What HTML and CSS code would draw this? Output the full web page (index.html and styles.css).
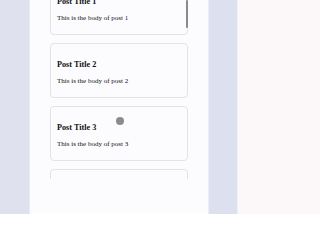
FILE: index.html
```html
<!DOCTYPE html>
<html>
<head>
<meta charset="utf-8">
<link rel="stylesheet" href="styles.css">
</head>
<body>
<div class="app">
  <div class="gutter-left"></div>
  <div class="panel">
    <div class="scroller">
      <div class="list">
        <div class="card"><h3>Post Title 1</h3><p>This is the body of post 1</p></div>
        <div class="card"><h3>Post Title 2</h3><p>This is the body of post 2</p></div>
        <div class="card"><h3>Post Title 3</h3><p>This is the body of post 3</p></div>
        <div class="card"><h3>Post Title 4</h3><p>This is the body of post 4</p></div>
      </div>
      <div class="scrollbar"></div>
    </div>
    <div class="cursor"></div>
  </div>
  <div class="gutter-mid"></div>
  <div class="side"></div>
</div>
</body>
</html>
```
FILE: styles.css
```css
html, body {
  margin: 0;
  padding: 0;
  height: 214px;
  overflow: hidden;
}
.app {
  display: flex;
  height: 214px;
  font-family: "Liberation Serif", "Times New Roman", serif;
  color: #111;
}
.gutter-left {
  width: 29px;
  background: #dfe1ee;
  border-right: 1px solid #e9ebf4;
}
.panel {
  position: relative;
  width: 138px;
  padding: 0 20px;
  background: #fcfbfd;
  border-right: 1px solid #eceef6;
}
.scroller {
  position: relative;
  height: 179px;
  overflow: hidden;
}
.list {
  margin-top: -20px;
  display: flex;
  flex-direction: column;
  gap: 8px;
}
.card {
  border: 1px solid #e3e3e6;
  border-radius: 4px;
  padding: 8px 6px 5px;
  background: #fcfbfd;
}
.card h3 {
  font-size: 8.2px;
  font-weight: bold;
  margin: 8px 0 8px;
}
.card p {
  font-size: 7px;
  margin: 7px 0;
}
.scrollbar {
  position: absolute;
  right: 0;
  top: 0;
  width: 2px;
  height: 28px;
  border-radius: 1px;
  background: #8a8a8c;
}
.cursor {
  position: absolute;
  left: 86px;
  top: 117px;
  width: 8px;
  height: 8px;
  border-radius: 50%;
  background: #8c8c8e;
}
.gutter-mid {
  width: 28px;
  background: #dde0ee;
  border-right: 1px solid #eef0fa;
}
.side {
  flex: 1;
  background: #fcf8fa;
}
```
